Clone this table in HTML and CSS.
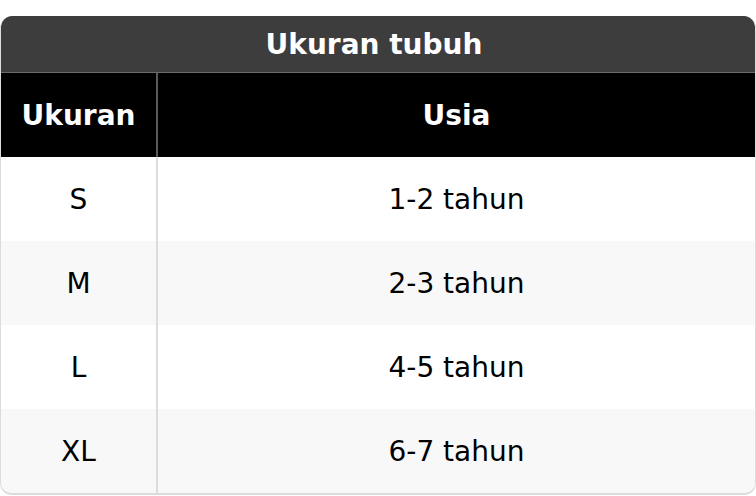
FILE: index.html
```html
<!DOCTYPE html>
<html lang="id">
<head>
<meta charset="utf-8">
<title>Ukuran tubuh</title>
<link rel="stylesheet" href="styles.css">
</head>
<body>
<div class="card">
  <div class="caption">Ukuran tubuh</div>
  <table class="size-table">
    <thead>
      <tr><th class="col-size">Ukuran</th><th class="col-age">Usia</th></tr>
    </thead>
    <tbody>
      <tr><td class="col-size">S</td><td class="col-age">1-2 tahun</td></tr>
      <tr class="alt"><td class="col-size">M</td><td class="col-age">2-3 tahun</td></tr>
      <tr><td class="col-size">L</td><td class="col-age">4-5 tahun</td></tr>
      <tr class="alt"><td class="col-size">XL</td><td class="col-age">6-7 tahun</td></tr>
    </tbody>
  </table>
</div>
</body>
</html>
```
FILE: styles.css
```css
html, body {
  margin: 0;
  padding: 0;
  background: #ffffff;
}
body {
  padding-top: 16px;
  font-family: "DejaVu Sans", sans-serif;
  font-size: 28px;
  color: #000;
}
.card {
  width: 756px;
  box-sizing: border-box;
  border: 1px solid #dcdcdc;
  border-top: none;
  border-bottom-width: 2px;
  border-radius: 12px;
  overflow: hidden;
}
.caption {
  height: 56px;
  padding-right: 8px;
  background: #3d3d3d;
  color: #fff;
  font-weight: bold;
  display: flex;
  align-items: center;
  justify-content: center;
  border-bottom: 1px solid #6a6a6a;
}
.size-table {
  width: 100%;
  border-collapse: collapse;
  table-layout: fixed;
}
.size-table th,
.size-table td {
  height: 84px;
  padding: 0;
  text-align: center;
  vertical-align: middle;
}
.size-table th {
  background: #000;
  color: #fff;
  font-weight: bold;
}
.size-table .col-size {
  width: 155px;
}
.size-table th.col-size {
  border-right: 2px solid #5a5a5a;
}
.size-table td.col-size {
  border-right: 2px solid #dcdcdc;
}
.size-table tr.alt td {
  background: #f8f8f8;
}
```
